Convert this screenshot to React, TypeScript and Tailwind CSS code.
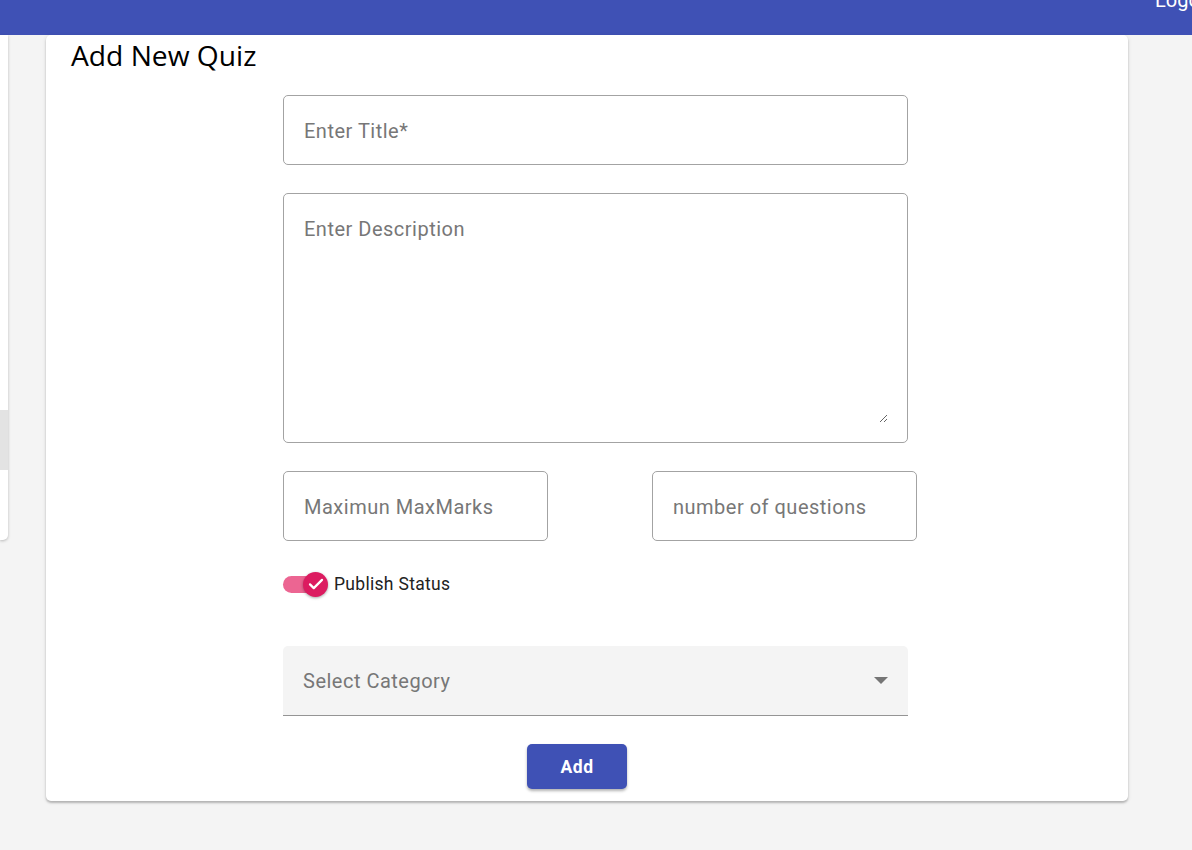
import React from "react";

const roboto = { fontFamily: "Roboto, 'Liberation Sans', sans-serif" };

const fieldBox =
  "rounded-[5px] border border-[#a3a3a3] bg-white flex items-center px-[20px] pt-[2px] h-[70px]";
const fieldInput =
  "w-full bg-transparent outline-none text-[20px] tracking-[0.5px] text-[#222] placeholder:text-[#777]";

function PublishSwitch() {
  return (
    <label className="flex items-center gap-[6px] cursor-pointer">
      <span className="relative flex items-center w-[45px] h-[25px]">
        <span className="h-[17px] w-[42px] rounded-full bg-[#ec6592]" />
        <span className="absolute left-[20px] top-0 flex h-[25px] w-[25px] items-center justify-center rounded-full bg-[#dc1b60] shadow-[0_1px_3px_rgba(0,0,0,0.35)]">
          <svg width="18" height="18" viewBox="0 0 24 24" fill="none">
            <path d="M4 12.5l5 5L20 6.5" stroke="white" strokeWidth="3" strokeLinecap="round" strokeLinejoin="round" />
          </svg>
        </span>
      </span>
      <span className="text-[17.5px] tracking-[0.3px] text-[#222]">Publish Status</span>
    </label>
  );
}

export default function App() {
  return (
    <div className="w-full h-[850px] bg-[#f4f4f4] overflow-hidden" style={roboto}>
      {/* top bar */}
      <header className="h-[35px] bg-[#3f51b5] flex items-start pl-[1155px] overflow-hidden whitespace-nowrap">
        <span className="-mt-[10px] text-[20px] leading-[20px] text-white">Logout</span>
      </header>

      <div className="flex items-start gap-[38px]">
        {/* sidebar edge */}
        <aside className="w-[8px] h-[505px] bg-white rounded-br-[5px] shadow-[0_1px_3px_rgba(0,0,0,0.25)] pt-[375px]">
          <div className="h-[60px] bg-[#e3e3e3]" />
        </aside>

        {/* main card */}
        <main className="w-[1082px] h-[766px] bg-white rounded-[5px] shadow-[0_2px_2px_rgba(0,0,0,0.2),0_1px_4px_rgba(0,0,0,0.12)]">
          <h2
            className="pl-[25px] pt-[2px] text-[28.2px] leading-[36px] text-black"
            style={{ fontFamily: "'Open Sans', Lato, sans-serif" }}
          >
            Add New Quiz
          </h2>

          <form className="ml-[237px] mt-[22px] w-[625px] flex flex-col" onSubmit={(e) => e.preventDefault()}>
            <div className={fieldBox}>
              <input className={fieldInput} placeholder="Enter Title*" />
            </div>

            <div className="mt-[28px] h-[250px] rounded-[5px] border border-[#a3a3a3] bg-white pl-[20px] pr-[19px] pt-[23px] pb-[19px]">
              <textarea
                className="w-full h-full bg-transparent outline-none text-[20px] leading-[24px] tracking-[0.5px] text-[#222] placeholder:text-[#777]"
                placeholder="Enter Description"
              />
            </div>

            <div className="mt-[28px] flex gap-[104px] w-[634px]">
              <div className={fieldBox + " w-[265px]"}>
                <input className={fieldInput} placeholder="Maximun MaxMarks" />
              </div>
              <div className={fieldBox + " w-[265px]"}>
                <input className={fieldInput} placeholder="number of questions" />
              </div>
            </div>

            <div className="mt-[30px]">
              <PublishSwitch />
            </div>

            <div className="mt-[49px] h-[70px] rounded-t-[5px] bg-[#f4f4f4] border-b border-[#949494] flex items-center justify-between pl-[20px] pr-[20px]">
              <span className="text-[20px] tracking-[0.5px] text-[#777]">Select Category</span>
              <svg width="14" height="8" viewBox="0 0 14 8">
                <path d="M0 0h14L7 7z" fill="#757575" />
              </svg>
            </div>

            <div className="mt-[28px] pl-[244px]">
              <button
                type="submit"
                className="w-[100px] h-[45px] rounded-[5px] bg-[#3f51b5] text-white text-[17.5px] font-bold tracking-[0.5px] shadow-[0_2px_3px_rgba(0,0,0,0.3)]"
              >
                Add
              </button>
            </div>
          </form>
        </main>
      </div>
    </div>
  );
}
